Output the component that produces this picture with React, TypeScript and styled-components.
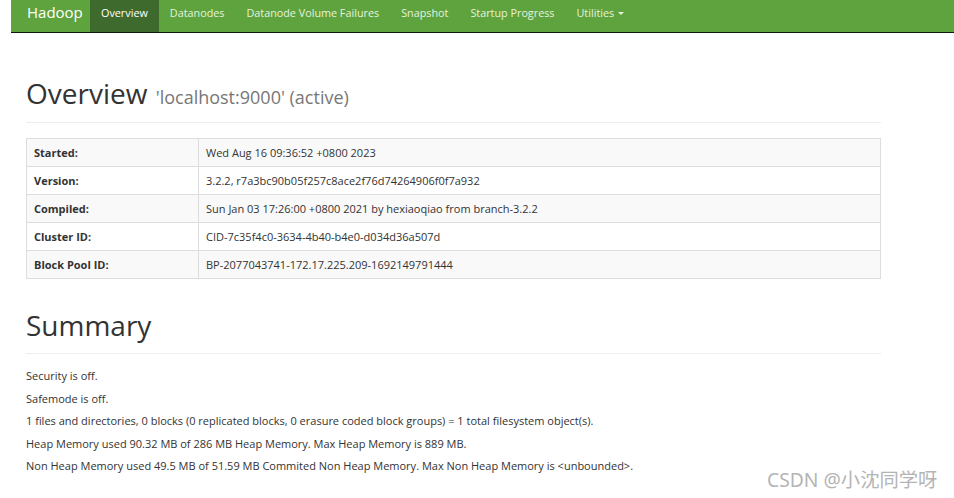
import React from "react";
import styled, { createGlobalStyle } from "styled-components";

const GlobalStyle = createGlobalStyle`
  html, body { margin: 0; padding: 0; background: #fff; }
  body {
    font-family: "Open Sans", "Noto Sans", "Liberation Sans", sans-serif;
    color: #333;
    font-size: 11px;
  }
`;

const Page = styled.div`
  position: relative;
  width: 954px;
  height: 498px;
  overflow: hidden;
`;

const Navbar = styled.nav`
  margin-left: 11px;
  height: 32px;
  background: #5fa33e;
  border-bottom: 1px solid #0e1a09;
  display: flex;
  align-items: stretch;
`;

const Brand = styled.a`
  display: flex;
  align-items: center;
  padding: 0 12px 8px 16px;
  width: 79px;
  box-sizing: border-box;
  font-size: 15px;
  color: #fff;
  text-decoration: none;
`;

const NavLink = styled.a<{ $active?: boolean }>`
  display: flex;
  align-items: center;
  padding: 0 11px 7px;
  font-size: 10.8px;
  color: ${(p) => (p.$active ? "#fff" : "#e6f2df")};
  background: ${(p) => (p.$active ? "#3f6a2e" : "transparent")};
  text-decoration: none;
  white-space: nowrap;
`;

const Caret = styled.span`
  display: inline-block;
  margin-left: 4px;
  margin-top: 2px;
  width: 0;
  height: 0;
  border-left: 3px solid transparent;
  border-right: 3px solid transparent;
  border-top: 3px solid #e6f2df;
`;

const Container = styled.main`
  width: 855px;
  margin-left: 26px;
`;

const PageHeader = styled.div<{ $top: number; $pad: number }>`
  margin-top: ${(p) => p.$top}px;
  padding-bottom: ${(p) => p.$pad}px;
  border-bottom: 1px solid #eee;
`;

const H1 = styled.h1`
  margin: 0;
  font-size: 28px;
  font-weight: 400;
  line-height: 36px;
  color: #333;
`;

const Small = styled.small`
  font-size: 18px;
  color: #777;
  margin-left: 1px;
`;

const Table = styled.table`
  margin-top: 15px;
  width: 855px;
  border-collapse: collapse;
  border: 1px solid #ddd;
`;

const Row = styled.tr<{ $striped?: boolean }>`
  background: ${(p) => (p.$striped ? "#f9f9f9" : "#fff")};
`;

const Th = styled.th`
  width: 157px;
  text-align: left;
  font-weight: 700;
  border: 1px solid #ddd;
  height: 27px;
  padding: 0 7px;
  font-size: 11px;
`;

const Td = styled.td`
  border: 1px solid #ddd;
  padding: 0 7px;
  font-size: 11px;
`;

const Para = styled.p`
  margin: 0;
  line-height: 22.5px;
  font-size: 11px;
`;

const Paras = styled.div`
  margin-top: 11px;
`;

const Watermark = styled.div`
  position: absolute;
  left: 767px;
  top: 465px;
  font-family: "Noto Sans", "Noto Sans CJK SC", sans-serif;
  font-size: 19.3px;
  color: #b4b4b4;
  white-space: nowrap;
`;

const rows: [string, string][] = [
  ["Started:", "Wed Aug 16 09:36:52 +0800 2023"],
  ["Version:", "3.2.2, r7a3bc90b05f257c8ace2f76d74264906f0f7a932"],
  ["Compiled:", "Sun Jan 03 17:26:00 +0800 2021 by hexiaoqiao from branch-3.2.2"],
  ["Cluster ID:", "CID-7c35f4c0-3634-4b40-b4e0-d034d36a507d"],
  ["Block Pool ID:", "BP-2077043741-172.17.225.209-1692149791444"],
];

const summary = [
  "Security is off.",
  "Safemode is off.",
  "1 files and directories, 0 blocks (0 replicated blocks, 0 erasure coded block groups) = 1 total filesystem object(s).",
  "Heap Memory used 90.32 MB of 286 MB Heap Memory. Max Heap Memory is 889 MB.",
  "Non Heap Memory used 49.5 MB of 51.59 MB Commited Non Heap Memory. Max Non Heap Memory is <unbounded>.",
];

export default function App() {
  return (
    <Page>
      <GlobalStyle />
      <Navbar>
        <Brand>Hadoop</Brand>
        <NavLink $active>Overview</NavLink>
        <NavLink>Datanodes</NavLink>
        <NavLink>Datanode Volume Failures</NavLink>
        <NavLink>Snapshot</NavLink>
        <NavLink>Startup Progress</NavLink>
        <NavLink>
          Utilities
          <Caret />
        </NavLink>
      </Navbar>
      <Container>
        <PageHeader $top={42} $pad={7}>
          <H1>
            Overview <Small>'localhost:9000' (active)</Small>
          </H1>
        </PageHeader>
        <Table>
          <tbody>
            {rows.map(([k, v], i) => (
              <Row key={k} $striped={i % 2 === 0}>
                <Th>{k}</Th>
                <Td>{v}</Td>
              </Row>
            ))}
          </tbody>
        </Table>
        <PageHeader $top={28} $pad={10}>
          <H1>Summary</H1>
        </PageHeader>
        <Paras>
          {summary.map((s) => (
            <Para key={s}>{s}</Para>
          ))}
        </Paras>
      </Container>
      <Watermark>CSDN @小沈同学呀</Watermark>
    </Page>
  );
}
